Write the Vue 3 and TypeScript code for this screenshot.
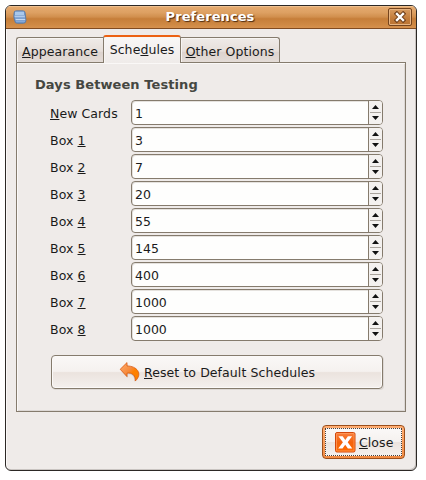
<script setup lang="ts">
import { ref } from 'vue'

interface Schedule {
  before: string
  key: string
  after: string
  days: number
}

const schedules = ref<Schedule[]>([
  { before: '', key: 'N', after: 'ew Cards', days: 1 },
  { before: 'Box ', key: '1', after: '', days: 3 },
  { before: 'Box ', key: '2', after: '', days: 7 },
  { before: 'Box ', key: '3', after: '', days: 20 },
  { before: 'Box ', key: '4', after: '', days: 55 },
  { before: 'Box ', key: '5', after: '', days: 145 },
  { before: 'Box ', key: '6', after: '', days: 400 },
  { before: 'Box ', key: '7', after: '', days: 1000 },
  { before: 'Box ', key: '8', after: '', days: 1000 },
])

function step(row: Schedule, by: number) {
  row.days = Math.max(1, row.days + by)
}
</script>

<template>
  <div class="window">
    <header class="titlebar">
      <svg class="app-icon" width="14" height="14" viewBox="0 0 14 14">
        <path d="M1 3.2Q1 .8 3.2 .8H9.8Q12 .8 12.2 3L13 10.5Q12.8 13.3 10.5 13.3H4.2Q2 13.3 1.8 11L.8 7Z" fill="#7399ca" stroke="#5577a6" stroke-width=".8" />
        <path d="M2 1.8H11V5H2Z" fill="#a9c8ec" />
        <path d="M1.6 6.2H11.8M2.6 9.6H12.2" stroke="#cfe1f6" stroke-width="1" />
        <path d="M2 7.8H12M3 11.4H12" stroke="#86a9d8" stroke-width="1.4" />
      </svg>
      <h1 class="title">Preferences</h1>
      <button class="win-close" aria-label="Close window">
        <svg width="12" height="12" viewBox="0 0 12 12">
          <path d="M2.8 2.8L9.2 9.2M9.2 2.8L2.8 9.2" stroke="#70401c" stroke-width="4.4" stroke-linecap="square" />
          <path d="M3 3L9 9M9 3L3 9" stroke="#fff" stroke-width="2.4" stroke-linecap="square" />
        </svg>
      </button>
    </header>
    <main class="content">
      <nav class="tabs">
        <button class="tab appearance"><span><u>A</u>ppearance</span></button>
        <button class="tab active"><span>Sche<u>d</u>ules</span></button>
        <button class="tab other"><span><u>O</u>ther Options</span></button>
      </nav>
      <section class="panel">
        <h2 class="heading">Days Between Testing</h2>
        <div class="rows">
          <div v-for="row in schedules" :key="row.before + row.key" class="row">
            <span class="label">{{ row.before }}<u>{{ row.key }}</u>{{ row.after }}</span>
            <div class="spin">
              <span class="value">{{ row.days }}</span>
              <div class="steps">
                <button class="step" aria-label="Increase" @click="step(row, 1)">
                  <svg width="7" height="4" viewBox="0 0 7 4"><path d="M3.5 0L7 4H0Z" fill="#111" /></svg>
                </button>
                <button class="step" aria-label="Decrease" @click="step(row, -1)">
                  <svg width="7" height="4" viewBox="0 0 7 4"><path d="M0 0H7L3.5 4Z" fill="#111" /></svg>
                </button>
              </div>
            </div>
          </div>
        </div>
        <button class="reset">
          <svg width="22" height="22" viewBox="0 0 22 22">
            <defs>
              <linearGradient id="undo" x1="0" y1="0" x2="1" y2="1">
                <stop offset="0" stop-color="#ffae70" />
                <stop offset=".45" stop-color="#f68a3c" />
                <stop offset=".6" stop-color="#ff8000" />
                <stop offset="1" stop-color="#fb8200" />
              </linearGradient>
            </defs>
            <path d="M2.5 10L8.5 17V13.5C12 12.7 15.3 14 15.7 20.8C21.5 16.5 22 7 9.5 6.5L9 3Z" fill="#000" opacity=".13" />
            <path d="M1.2 8.3L8 1.6V5C17.5 4.8 24.3 12.5 16.3 20C16.7 14.6 13 11.2 8 12.2V15.6Z" fill="url(#undo)" stroke="#dc5b12" stroke-width=".8" stroke-linejoin="round" />
          </svg>
          <span class="reset-text"><u>R</u>eset to Default Schedules</span>
        </button>
      </section>
      <footer class="footer">
        <button class="close">
          <span class="focus">
            <svg width="21" height="21" viewBox="0 0 21 21">
              <defs>
                <linearGradient id="stop" x1="0" y1="0" x2="0" y2="1">
                  <stop offset="0" stop-color="#f98040" />
                  <stop offset=".5" stop-color="#f4620c" />
                  <stop offset="1" stop-color="#ff6c00" />
                </linearGradient>
              </defs>
              <rect x=".5" y=".5" width="19.5" height="19.5" rx="1.5" fill="url(#stop)" stroke="#d2480c" />
              <rect x="1.5" y="1.5" width="17.5" height="17.5" rx=".5" fill="none" stroke="#ff9a5c" stroke-width=".8" />
              <path d="M3.4 4.2H7.7L10.3 7.9L12.9 4.2H17.1L12.7 10.3L17.3 16.6H12.9L10.2 12.8L7.5 16.6H3.2L7.9 10.3Z" fill="#fff" />
            </svg>
            <span class="close-text"><u>C</u>lose</span>
          </span>
        </button>
      </footer>
    </main>
  </div>
</template>

<style>
body {
  background: #fff;
}
</style>

<style scoped>
* {
  box-sizing: border-box;
}
.window {
  width: 412px;
  height: 466px;
  margin: 5px;
  border: 1px solid #2c2825;
  border-radius: 6px;
  overflow: hidden;
  background: #efebe9;
  box-shadow: inset -1px -1px #c9c4c1, inset 1px 0 #fbf9f8;
  font: 12.5px/15px 'DejaVu Sans', sans-serif;
  letter-spacing: 0.08px;
  color: #1a1a1a;
}
button {
  margin: 0;
  padding: 0;
  border: 0;
  background: none;
  font: inherit;
  letter-spacing: inherit;
  color: inherit;
}
svg {
  display: block;
  flex: none;
}
u {
  text-decoration: underline;
  text-decoration-thickness: 1px;
  text-underline-offset: 1px;
  text-decoration-skip-ink: none;
}
.titlebar {
  display: flex;
  align-items: center;
  height: 23px;
  padding: 0 4px 0 7px;
  border-bottom: 1px solid #804b20;
  background: linear-gradient(#e6ab70, #dda062 30%, #d18f4d 50%, #c67e39 58%, #cf8944 85%, #d6914e);
  box-shadow: inset 0 1px #eec08f;
}
.title {
  flex: 1;
  margin: 0 0 0 5px;
  text-align: center;
  font-size: 13px;
  font-weight: bold;
  line-height: 16px;
  color: #fff;
  text-shadow: 1px 1px 1px #4b2a10;
}
.win-close {
  display: flex;
  align-items: center;
  justify-content: center;
  width: 24px;
  height: 18px;
  border: 1px solid #75441d;
  border-radius: 2px;
  background: linear-gradient(#d89c61, #c27b39 60%, #ba7434);
  box-shadow: inset 0 0 0 1px #e6b483;
}
.content {
  padding: 6px 10px 0;
}
.tabs {
  display: flex;
  align-items: flex-end;
  height: 27px;
}
.tab {
  display: flex;
  justify-content: center;
  height: 25px;
  padding-top: 6px;
  border: 1px solid #857b6d;
  border-bottom: 0;
  background: linear-gradient(#efebe8, #e7dfda 55%, #ddd3ce 60%, #e4dcd7);
  box-shadow: inset 1px 1px #f8f5f3;
  white-space: nowrap;
}
.appearance {
  width: 87px;
  border-right: 0;
  border-radius: 3px 0 0;
}
.tab.active {
  position: relative;
  width: 78px;
  height: 28px;
  margin-bottom: -1px;
  padding-top: 5px;
  border-top: 2px solid #ec6113;
  border-radius: 3px 3px 0 0;
  background: linear-gradient(#f9f7f6, #efebe9);
}
.other {
  width: 99px;
  border-left: 0;
  border-radius: 0 3px 0 0;
}
.panel {
  height: 350px;
  padding: 14px 22px 0 34px;
  border: 1px solid #857b6d;
  box-shadow: inset 1px 1px #faf8f7, inset -1px -1px #ddd8d5;
}
.heading {
  margin: 0 0 8px -16px;
  font-size: 13px;
  font-weight: bold;
  line-height: 15px;
  color: #454741;
}
.rows {
  display: grid;
  gap: 2px;
}
.row {
  display: flex;
  align-items: center;
  height: 25px;
}
.label {
  width: 81px;
  margin-left: -1px;
  padding-top: 1px;
  white-space: nowrap;
}
.spin {
  display: flex;
  width: 252px;
  height: 25px;
  border: 1px solid #857b6d;
  border-radius: 4px;
  background: #fefefd;
  box-shadow: inset 1px 1px #e5e2de;
  overflow: hidden;
}
.value {
  flex: 1;
  padding: 5px 0 0 3px;
  letter-spacing: 0;
}
.steps {
  display: flex;
  flex-direction: column;
  width: 14px;
  border-left: 1px solid #857b6d;
  background: #f4f1ef;
}
.step {
  display: flex;
  align-items: center;
  justify-content: center;
  height: 11px;
  margin: 0 1px;
}
.step + .step {
  height: 12px;
  padding-bottom: 1px;
  border-top: 1px solid #aaa49d;
}
.reset {
  display: flex;
  align-items: center;
  width: 332px;
  height: 34px;
  margin: 14px 0 0 0;
  padding-left: 67px;
  border: 1px solid #857b6d;
  border-radius: 4px;
  background: linear-gradient(#faf8f7, #f5f1ef 48%, #ebe3de 52%, #f4f0ee);
  box-shadow: inset 0 0 0 1px #fbf9f8, 1px 1px #ddd8d5;
  white-space: nowrap;
}
.reset-text {
  margin-left: 3px;
}
.footer {
  display: flex;
  justify-content: flex-end;
  padding: 13px 1px 0 0;
}
.close {
  width: 83px;
  height: 34px;
  padding: 2px;
  border: 1px solid #9c4f1b;
  border-radius: 4px;
  background: linear-gradient(#ffad72, #f28b43);
}
.focus {
  display: flex;
  align-items: center;
  height: 28px;
  padding-left: 9px;
  border: 1px dotted #49413a;
  background: linear-gradient(#faf8f7, #f5f1ef 48%, #ebe3de 52%, #f4f0ee);
}
.close-text {
  margin-left: 3px;
}
</style>
